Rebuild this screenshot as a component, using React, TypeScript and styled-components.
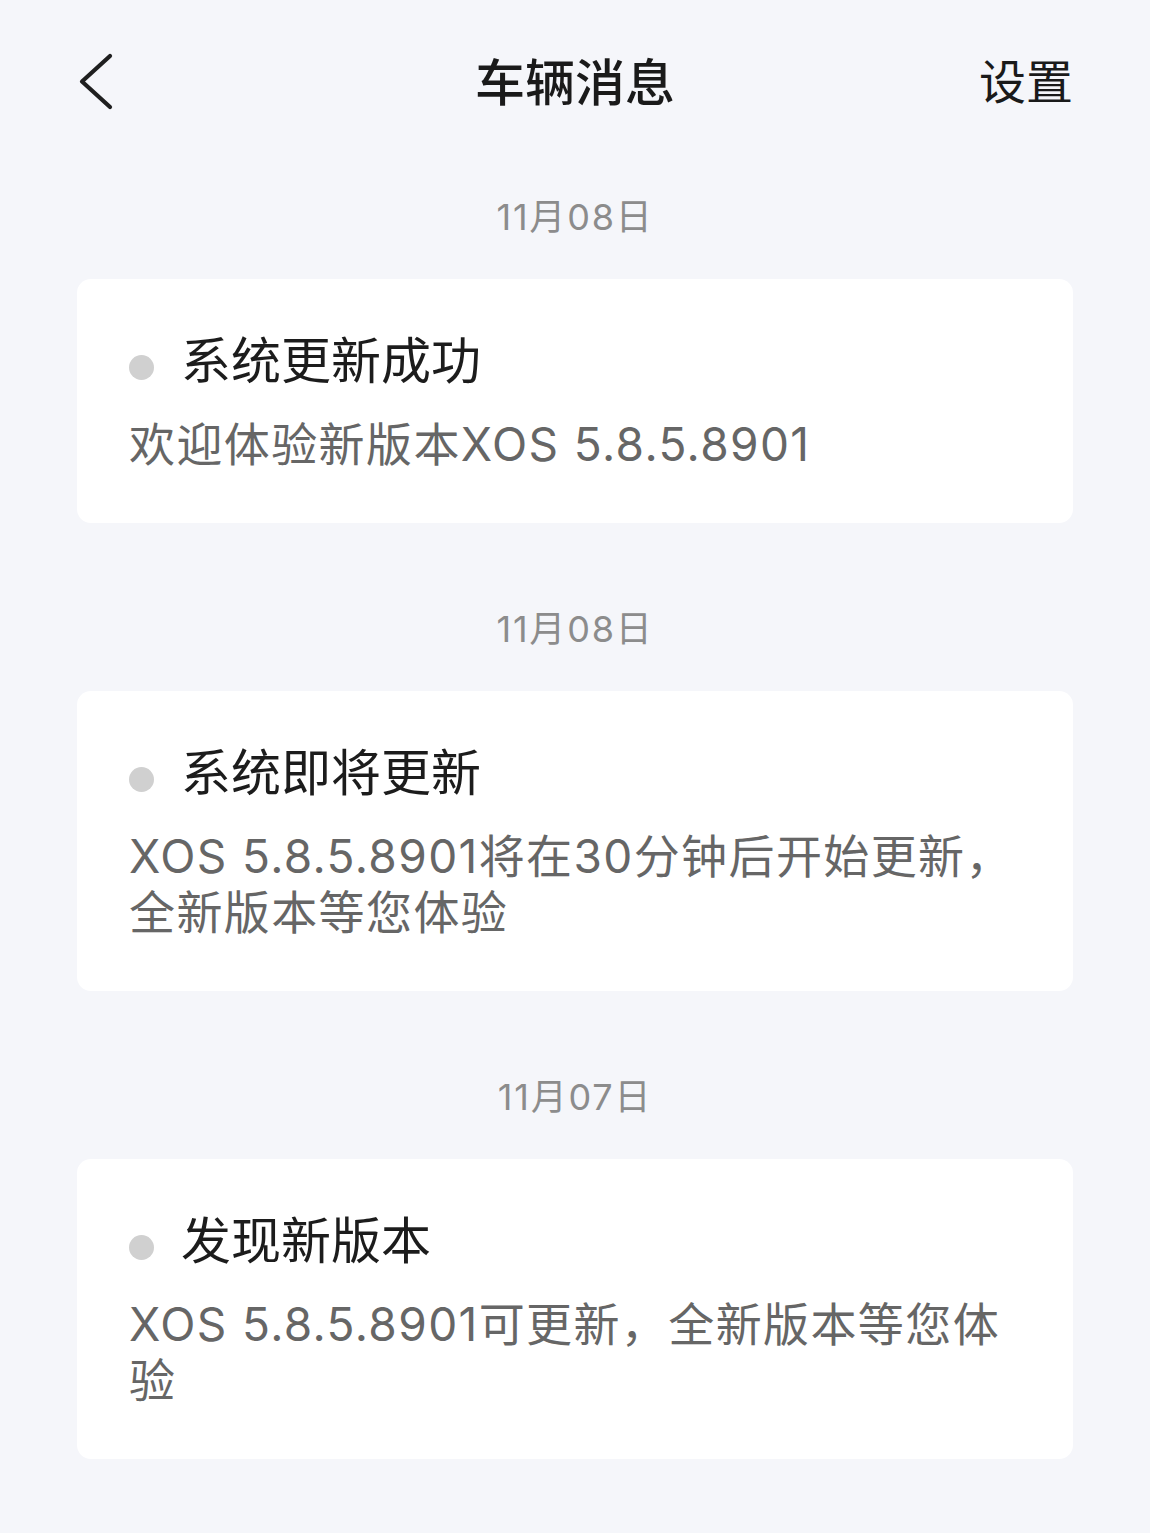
import React from "react";
import styled, { createGlobalStyle } from "styled-components";

const GlobalStyle = createGlobalStyle`
  html, body {
    margin: 0;
    padding: 0;
    background: #f5f6fa;
  }
  body {
    font-family: "Noto Sans CJK SC", "Noto Sans", sans-serif;
    -webkit-font-smoothing: antialiased;
  }
  * { box-sizing: border-box; }
`;

const Page = styled.div`
  min-height: 1533px;
  background: #f5f6fa;
  padding: 0 77px 60px;
`;

const Header = styled.header`
  height: 158px;
  display: grid;
  grid-template-columns: 1fr auto 1fr;
  align-items: center;
`;

const BackButton = styled.button`
  justify-self: start;
  width: 40px;
  height: 60px;
  padding: 0;
  border: none;
  background: none;
  display: flex;
  align-items: center;
  cursor: pointer;
  margin-top: 6px;
`;

const Title = styled.h1`
  margin: 0;
  font-size: 50px;
  line-height: 60px;
  font-weight: 500;
  color: #1a1a1a;
`;

const SettingsLink = styled.span`
  justify-self: end;
  font-size: 47px;
  line-height: 60px;
  font-weight: 400;
  color: #1a1a1a;
`;

const List = styled.div`
  margin-top: 37px;
  display: flex;
  flex-direction: column;
  gap: 84px;
`;

const Section = styled.section`
  display: flex;
  flex-direction: column;
`;

const DateLabel = styled.div`
  text-align: center;
  font-family: "Inter", "Noto Sans CJK SC", sans-serif;
  font-size: 36px;
  letter-spacing: 1.8px;
  line-height: 44px;
  color: #8c8c8c;
  margin-bottom: 40px;
`;

const Card = styled.div`
  background: #ffffff;
  border-radius: 14px;
  padding: 48px 52px 51px;
`;

const TitleRow = styled.div`
  display: flex;
  align-items: center;
  gap: 27px;
`;

const Dot = styled.span`
  flex: none;
  width: 25px;
  height: 25px;
  border-radius: 50%;
  background: #d0d0d0;
  margin-top: 20px;
`;

const CardTitle = styled.div`
  font-size: 50px;
  line-height: 60px;
  font-weight: 400;
  color: #1c1c1c;
`;

const CardBody = styled.p`
  margin: 29px 0 0;
  font-family: "Inter", "Noto Sans CJK SC", sans-serif;
  font-size: 46px;
  letter-spacing: 1.4px;
  line-height: 56px;
  color: #666666;
`;

type Message = { date: string; title: string; body: string };

const messages: Message[] = [
  { date: "11月08日", title: "系统更新成功", body: "欢迎体验新版本XOS 5.8.5.8901" },
  {
    date: "11月08日",
    title: "系统即将更新",
    body: "XOS 5.8.5.8901将在30分钟后开始更新，全新版本等您体验",
  },
  {
    date: "11月07日",
    title: "发现新版本",
    body: "XOS 5.8.5.8901可更新，全新版本等您体验",
  },
];

export default function App() {
  return (
    <>
      <GlobalStyle />
      <Page>
        <Header>
          <BackButton aria-label="返回">
            <svg width="40" height="60" viewBox="0 0 40 60" fill="none">
              <path
                d="M33 4 L5 29.5 L33 55"
                stroke="#1f1f1f"
                strokeWidth="4.2"
                strokeLinecap="round"
                strokeLinejoin="round"
              />
            </svg>
          </BackButton>
          <Title>车辆消息</Title>
          <SettingsLink>设置</SettingsLink>
        </Header>
        <List>
          {messages.map((m, i) => (
            <Section key={i}>
              <DateLabel>{m.date}</DateLabel>
              <Card>
                <TitleRow>
                  <Dot />
                  <CardTitle>{m.title}</CardTitle>
                </TitleRow>
                <CardBody>{m.body}</CardBody>
              </Card>
            </Section>
          ))}
        </List>
      </Page>
    </>
  );
}
